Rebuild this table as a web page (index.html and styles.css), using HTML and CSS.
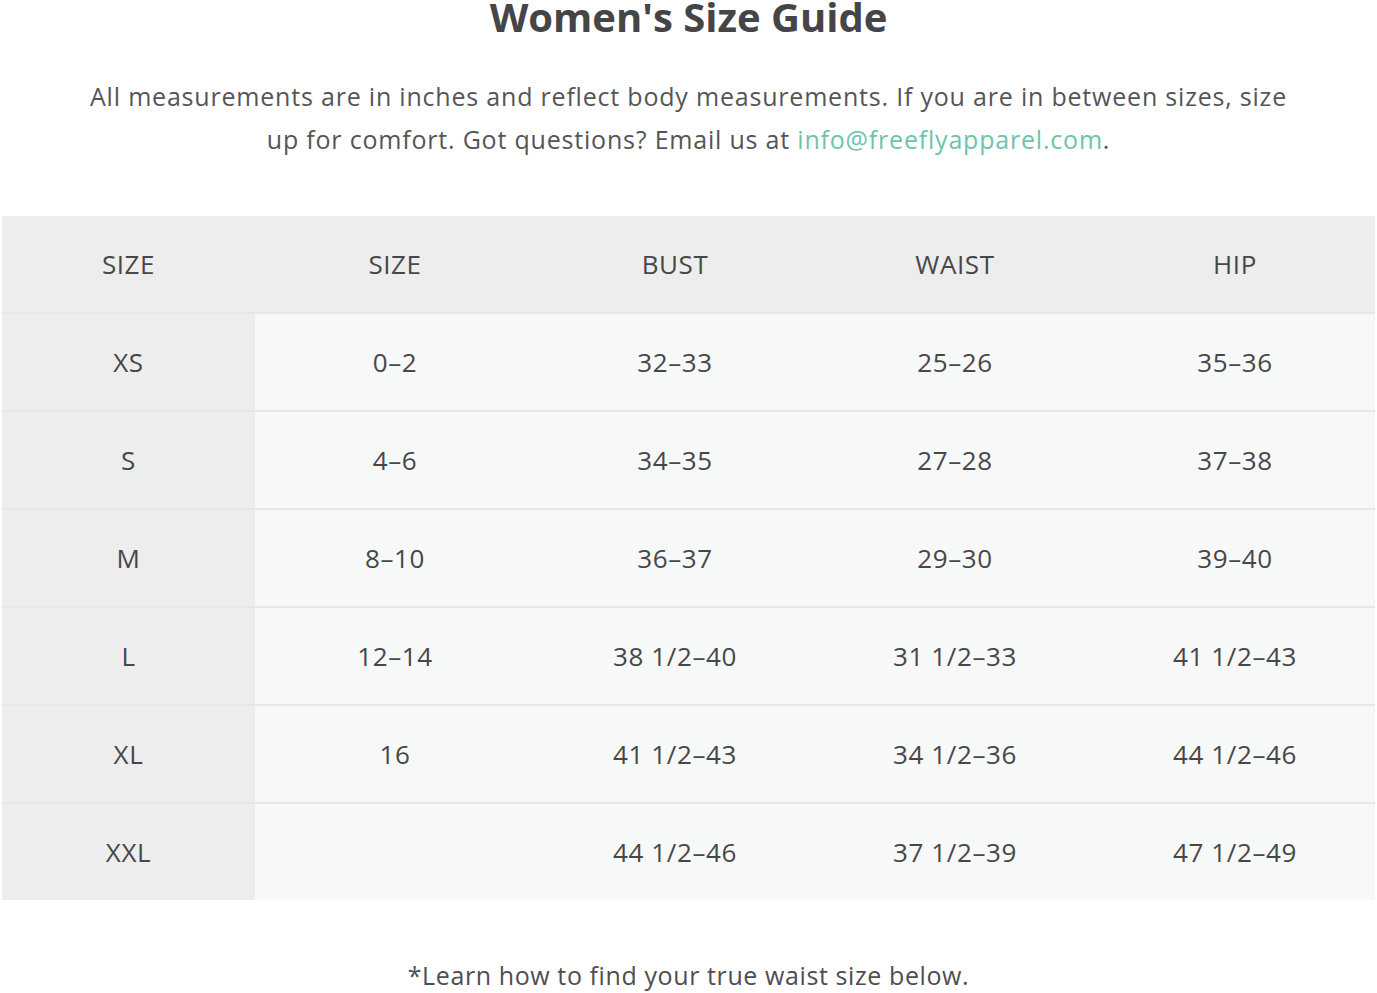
FILE: index.html
```html
<!DOCTYPE html>
<html>
<head>
<meta charset="utf-8">
<link rel="stylesheet" href="styles.css">
</head>
<body>
<main class="page">
  <h1 class="title">Women's Size Guide</h1>
  <p class="intro">All measurements are in inches and reflect body measurements. If you are in between sizes, size up for comfort. Got questions? Email us at <a class="mail" href="#">info@freeflyapparel.com</a>.</p>
  <table class="sizes">
    <thead>
      <tr><th>SIZE</th><th>SIZE</th><th>BUST</th><th>WAIST</th><th>HIP</th></tr>
    </thead>
    <tbody>
      <tr><th>XS</th><td>0–2</td><td>32–33</td><td>25–26</td><td>35–36</td></tr>
      <tr><th>S</th><td>4–6</td><td>34–35</td><td>27–28</td><td>37–38</td></tr>
      <tr><th>M</th><td>8–10</td><td>36–37</td><td>29–30</td><td>39–40</td></tr>
      <tr><th>L</th><td>12–14</td><td>38 1/2–40</td><td>31 1/2–33</td><td>41 1/2–43</td></tr>
      <tr><th>XL</th><td>16</td><td>41 1/2–43</td><td>34 1/2–36</td><td>44 1/2–46</td></tr>
      <tr><th>XXL</th><td></td><td>44 1/2–46</td><td>37 1/2–39</td><td>47 1/2–49</td></tr>
    </tbody>
  </table>
  <p class="note">*Learn how to find your true waist size below.</p>
</main>
</body>
</html>
```
FILE: styles.css
```css
html, body {
  margin: 0;
  padding: 0;
  background: #ffffff;
}
body {
  font-family: "Open Sans", Lato, Arial, sans-serif;
  color: #4a4a4c;
}
.page {
  width: 1377px;
  display: flex;
  flex-direction: column;
  align-items: center;
}
.title {
  margin: -6px 0 0;
  font-size: 40px;
  line-height: 46px;
  font-weight: 700;
  color: #454548;
}
.intro {
  margin: 35px 0 0;
  width: 1215px;
  text-align: center;
  font-size: 25px;
  line-height: 43px;
  letter-spacing: 0.8px;
  color: #555558;
}
.mail {
  color: #6cc4ad;
  text-decoration: none;
}
.sizes {
  margin-top: 55px;
  width: 1373px;
  border-collapse: collapse;
  table-layout: fixed;
  font-size: 26px;
  letter-spacing: 0.6px;
  color: #474749;
}
.sizes th, .sizes td {
  height: 96px;
  padding: 0;
  text-align: center;
  font-weight: 400;
  border-top: 2px solid #e6e7e7;
}
.sizes thead th {
  background: #ededed;
  border-top: none;
  height: 96px;
}
.sizes thead th:first-child,
.sizes tbody th {
  width: 253px;
}
.sizes tbody th {
  background: #ededed;
}
.sizes tbody td {
  background: #f7f8f8;
}
.note {
  margin: 59px 0 0;
  font-size: 25px;
  line-height: 32px;
  letter-spacing: 0.6px;
  color: #4e4e50;
}
```
